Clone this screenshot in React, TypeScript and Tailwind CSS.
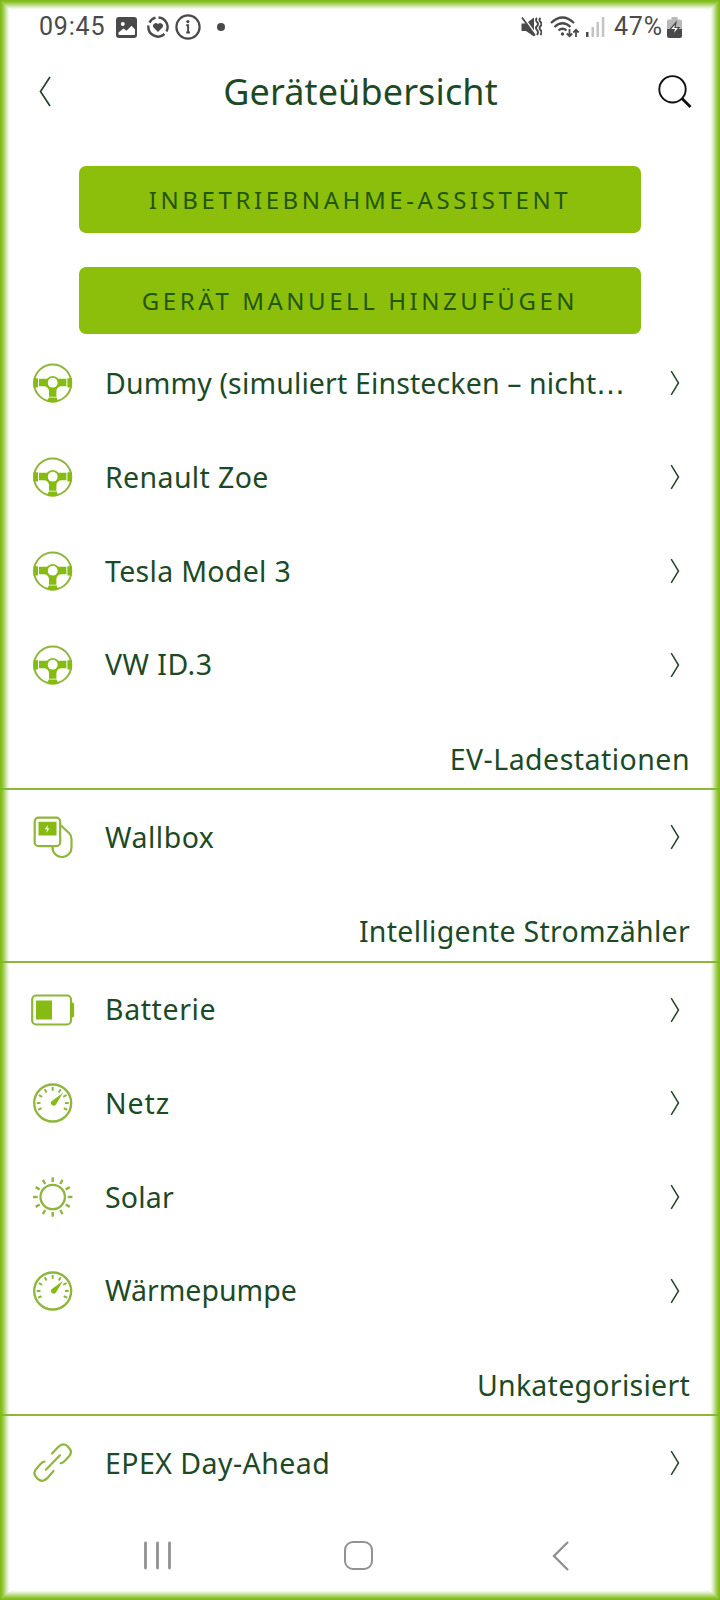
import type { ReactNode } from "react";

interface Device {
  name: string;
  icon: ReactNode;
  tracking: string;
  truncated?: boolean;
}

interface Section {
  title?: string;
  tracking?: string;
  devices: Device[];
}

function WheelIcon() {
  return (
    <svg width="40" height="40" viewBox="0 0 40 40" fill="none">
      <circle cx="19.700" cy="20" r="18.600" stroke="#8fb53c" strokeWidth="2" />
      <path
        d="M.4 15.200H5v9.400H.4zM34.400 15.200H39v9.400h-4.600zM15.700 34.600h8l1.500 4.200q-5.500 1.300-11 0z"
        fill="#86bc12"
      />
      <path
        d="M6 15.700h8a7.200 7.200 0 0 1 11.400 0h8v7.600h-5.200q-4.800.7-4.800 5.200v5.300H16v-5.300q0-4.500-4.800-5.200H6z"
        fill="#86bc12"
      />
      <circle cx="19.700" cy="19.700" r="4.900" fill="#fff" />
    </svg>
  );
}

function WallboxIcon() {
  return (
    <svg width="40" height="42" viewBox="0 0 40 42" fill="none" stroke="#8fb53c" strokeWidth="2.200">
      <rect x="1.700" y="1.700" width="25.500" height="28.500" rx="4" />
      <path d="M28 9.500l8 7.500q2.500 2.300 2.500 6v8.500a9.500 9.500 0 0 1-19 0v-1.500" />
      <rect x="5.500" y="5.800" width="18" height="13.700" fill="#86bc12" stroke="none" />
      <path d="M15 9l-3.200 4.300h2.200l-.7 3.500 3.200-4.300h-2.200z" fill="#fff" stroke="none" />
    </svg>
  );
}

function BatteryIcon() {
  return (
    <svg width="44" height="32" viewBox="0 0 44 32" fill="none">
      <rect x="1.200" y="1.500" width="38.800" height="29" rx="4" stroke="#8fb53c" strokeWidth="2.200" />
      <rect x="5" y="6.500" width="16" height="19" fill="#86bc12" />
      <path d="M39.500 8.500h2q1.600 0 1.600 2v11q0 2-1.600 2h-2z" fill="#86bc12" />
    </svg>
  );
}

const GAUGE_TICKS = [-115, -90, -60, -30, 0, 30, 60, 90, 115];

function GaugeIcon() {
  return (
    <svg width="40" height="40" viewBox="0 0 40 40" fill="none" stroke="#8fb53c">
      <circle cx="19.700" cy="20" r="18.500" strokeWidth="2.300" />
      {GAUGE_TICKS.map((angle) => (
        <path
          key={angle}
          d="M19.700 4v3.800"
          strokeWidth="2"
          transform={`rotate(${angle} 19.700 20)`}
        />
      ))}
      <path
        d="M30 9.700l-7.200 12a2.700 2.700 0 1 1-4.200-3.400z"
        fill="#86bc12"
        stroke="none"
      />
    </svg>
  );
}

const SUN_RAYS = [0, 30, 60, 90, 120, 150, 180, 210, 240, 270, 300, 330];

function SunIcon() {
  return (
    <svg width="40" height="40" viewBox="0 0 40 40" fill="none" stroke="#8fb53c">
      <circle cx="19.700" cy="20" r="12.200" strokeWidth="2.300" />
      {SUN_RAYS.map((angle) => (
        <path
          key={angle}
          d="M19.700 .3v4.700"
          strokeWidth="2.400"
          transform={`rotate(${angle} 19.700 20)`}
        />
      ))}
    </svg>
  );
}

function LinkIcon() {
  return (
    <svg
      width="40"
      height="40"
      viewBox="0 0 40 40"
      fill="none"
      stroke="#8fb53c"
      strokeWidth="2.200"
      strokeLinecap="round"
    >
      <path d="M19 10.500l6.500-6.700q4.500-4.600 8.800-.8l1.600 1.700q4 4.300 0 8.800l-4.500 4.700q-1.500 1.500-3.700 2" />
      <path d="M11.500 18.500q-2 .5-3.500 2l-4.200 4.700q-4.500 4.500-.8 8.800l2 2.200q4.500 3.700 9-.8l6.500-7.400" />
      <path d="M12.800 26.700L27 12.300" />
    </svg>
  );
}

function Chevron() {
  return (
    <svg width="10" height="26" viewBox="0 0 10 26" fill="none" stroke="#24452c" strokeWidth="1.500">
      <path d="M1.200 1.200L8.500 13 1.200 24.800" />
    </svg>
  );
}

const SECTIONS: Section[] = [
  {
    devices: [
      {
        name: "Dummy (simuliert Einstecken – nicht",
        icon: <WheelIcon />,
        tracking: "tracking-[0.130px]",
        truncated: true,
      },
      { name: "Renault Zoe", icon: <WheelIcon />, tracking: "tracking-[0.370px]" },
      { name: "Tesla Model 3", icon: <WheelIcon />, tracking: "tracking-[0.300px]" },
      { name: "VW ID.3", icon: <WheelIcon />, tracking: "tracking-[0.450px]" },
    ],
  },
  {
    title: "EV-Ladestationen",
    tracking: "tracking-[0.470px]",
    devices: [{ name: "Wallbox", icon: <WallboxIcon />, tracking: "tracking-[0.500px]" }],
  },
  {
    title: "Intelligente Stromzähler",
    tracking: "tracking-[0.300px]",
    devices: [
      { name: "Batterie", icon: <BatteryIcon />, tracking: "tracking-[0.600px]" },
      { name: "Netz", icon: <GaugeIcon />, tracking: "tracking-[0.900px]" },
      { name: "Solar", icon: <SunIcon />, tracking: "tracking-[0.200px]" },
      { name: "Wärmepumpe", icon: <GaugeIcon />, tracking: "tracking-normal" },
    ],
  },
  {
    title: "Unkategorisiert",
    tracking: "tracking-[0.270px]",
    devices: [{ name: "EPEX Day-Ahead", icon: <LinkIcon />, tracking: "tracking-[0.450px]" }],
  },
];

function StatusBar() {
  return (
    <header className="flex h-[54px] items-center justify-between pr-[38px] pl-[39px] font-[Roboto,sans-serif] text-[25px] text-[#4a4a4a]">
      <div className="flex items-center">
        <span className="w-[66px] whitespace-nowrap tracking-[0.800px]">09:45</span>
        <svg className="ml-[11px]" width="21" height="21" viewBox="0 0 21 21">
          <rect width="21" height="21" rx="3" fill="#4a4a4a" />
          <circle cx="6.800" cy="7" r="2" fill="#fff" />
          <path d="M2.500 15.500l5-4 3 2.300 5-5 3.500 3.700v4.500q0 1-1 1h-14.500q-1 0-1-1z" fill="#fff" />
        </svg>
        <svg className="ml-[10px]" width="22" height="22" viewBox="0 0 22 22" fill="none" stroke="#4a4a4a" strokeWidth="2.400">
          <path d="M8.500 1.600a9.600 9.600 0 0 0-6 5M1.500 9.500a9.600 9.600 0 0 0 16 8.500M19.500 15.500A9.600 9.600 0 0 0 11.500 1.500" />
          <path d="M11 16l-4.400-4.500a2.600 2.600 0 0 1 4.400-3.200 2.600 2.600 0 0 1 4.400 3.200z" fill="#4a4a4a" stroke="none" />
        </svg>
        <svg className="ml-[6px]" width="26" height="26" viewBox="0 0 26 26" fill="none" stroke="#4a4a4a">
          <circle cx="13" cy="13" r="11.600" strokeWidth="2.200" />
          <path d="M11.200 11.200h1.900v7.300M11.200 18.500h3.800" strokeWidth="1.900" />
          <circle cx="12.900" cy="7.600" r="1.600" fill="#4a4a4a" stroke="none" />
        </svg>
        <span className="ml-4 size-2 rounded-full bg-[#4a4a4a]" />
      </div>
      <div className="flex items-center">
        <svg width="21" height="20" viewBox="0 0 21 20" fill="none" stroke="#4a4a4a">
          <path d="M.5 6.500H5l8-6v19l-8-5.500H.5z" fill="#4a4a4a" stroke="none" />
          <path d="M2.500 0L16 19" stroke="#fff" strokeWidth="1.600" />
          <path d="M1 .5L14 18.500" strokeWidth="1.800" />
          <path d="M16 1q-2 2 0 4t0 4 0 4 0 5M19.500 1q-2 2 0 4t0 4 0 4 0 5" strokeWidth="1.900" />
        </svg>
        <svg className="ml-2" width="30" height="22" viewBox="0 0 30 22" fill="none" stroke="#4a4a4a" strokeWidth="2.200">
          <path d="M1 7q11.500-11 23 0M4.500 11q8-7.500 16 0M8.500 14.500q4-3.500 8 0" />
          <circle cx="12.500" cy="18" r="1.700" fill="#4a4a4a" stroke="none" />
          <path d="M19.500 13v7M16.800 17.500l2.700 2.700 2.700-2.700M26 21v-7M23.300 16.500l2.700-2.700 2.700 2.700" strokeWidth="1.800" />
        </svg>
        <svg className="ml-[6px]" width="19" height="20" viewBox="0 0 19 20">
          <rect x="0" y="15" width="2.500" height="5" fill="#4a4a4a" />
          <path d="M5.500 10H8v10H5.500zM10.500 5H13v15h-2.500zM15.800 0h2.500v20h-2.500z" fill="#c4c4c4" />
        </svg>
        <span className="ml-[9px] w-[53px] whitespace-nowrap tracking-[0.800px]">47%</span>
        <svg width="15" height="21" viewBox="0 0 15 21">
          <path d="M4.500 0h6v2.500H13q2 0 2 2V12H0V4.500q0-2 2-2h2.500z" fill="#b8b8b8" />
          <path d="M0 12h15v7q0 2-2 2H2q-2 0-2-2z" fill="#4a4a4a" />
          <path d="M9 5.500L3 12.500h4.200l-1.200 5.500 6-7.500H8z" fill="#fff" stroke="#4a4a4a" strokeWidth="1.200" />
        </svg>
      </div>
    </header>
  );
}

function TitleBar() {
  return (
    <div className="flex h-[76px] items-center justify-between pr-[28px] pb-[2px] pl-[39px]">
      <svg width="12" height="31" viewBox="0 0 12 31" fill="none" stroke="#24452c" strokeWidth="1.700">
        <path d="M11 1L1.500 15.500 11 30" />
      </svg>
      <h1 className="mt-0.5 ml-3 text-[36px] tracking-[0.120px]">Geräteübersicht</h1>
      <svg width="34" height="33" viewBox="0 0 34 33" fill="none" stroke="#111">
        <circle cx="14.500" cy="14.300" r="13.200" strokeWidth="1.900" />
        <path d="M24 23.500l8.500 8.500" strokeWidth="2.800" />
      </svg>
    </div>
  );
}

function DeviceRow({ name, icon, tracking, truncated }: Device) {
  return (
    <li className="flex h-[93.750px] items-center pr-[40px]">
      <span className="flex w-[105px] justify-center">{icon}</span>
      <span className={`flex-1 whitespace-nowrap ${tracking}`}>
        {name}
        {truncated && <span className="font-['DejaVu_Sans',sans-serif] leading-none">…</span>}
      </span>
      <Chevron />
    </li>
  );
}

function NavBar() {
  return (
    <nav className="flex h-[91px] items-center justify-between pr-[151px] pl-[144px] text-[#929292]">
      <svg width="27" height="29" viewBox="0 0 27 29" stroke="currentColor" strokeWidth="2.800" strokeLinecap="round">
        <path d="M1.500 2v25M13.500 2v25M25.500 2v25" />
      </svg>
      <span className="mr-[7px] h-[29px] w-[29px] rounded-[9px] border-[2.500px] border-current" />
      <svg width="17" height="30" viewBox="0 0 17 30" fill="none" stroke="currentColor" strokeWidth="2.400">
        <path d="M16 1L2 15l14 14" />
      </svg>
    </nav>
  );
}

export default function App() {
  return (
    <div className="relative h-[1600px] w-[720px] overflow-hidden bg-white font-['Noto_Sans',sans-serif] text-[28.500px] text-[#1d4a26]">
      <StatusBar />
      <TitleBar />
      <div className="flex flex-col gap-[34px] px-[79px] pt-9 text-[24px] text-[#23560f]">
        <button className="h-[67px] rounded-[7px] bg-[#8bbf0b] tracking-[3.600px]">INBETRIEBNAHME-ASSISTENT</button>
        <button className="h-[67px] rounded-[7px] bg-[#8bbf0b] tracking-[3.550px]">GERÄT MANUELL HINZUFÜGEN</button>
      </div>
      <main className="mt-[2.500px]">
        {SECTIONS.map(({ title, tracking, devices }) => (
          <section key={title ?? "vehicles"}>
            {title && (
              <h2 className="flex h-[78.700px] items-end justify-end border-b-2 border-[#8fb53c] pr-[30px] pb-[7.500px]">
                <span className={tracking}>{title}</span>
              </h2>
            )}
            <ul>
              {devices.map((device) => (
                <DeviceRow key={device.name} {...device} />
              ))}
            </ul>
          </section>
        ))}
      </main>
      <NavBar />
      {/* Green glow around the screen edge, one ring per pixel so the corners stay mitred */}
      <div className="pointer-events-none absolute inset-0 shadow-[inset_0_0_0_1px_rgb(128_188_24),inset_0_0_0_2px_rgb(128_188_24/0.67),inset_0_0_0_3px_rgb(128_188_24/0.44),inset_0_0_0_4px_rgb(128_188_24/0.32),inset_0_0_0_5px_rgb(128_188_24/0.24),inset_0_0_0_6px_rgb(128_188_24/0.2),inset_0_0_0_7px_rgb(128_188_24/0.15),inset_0_0_0_8px_rgb(128_188_24/0.13),inset_0_0_0_9px_rgb(128_188_24/0.07),inset_0_0_0_10px_rgb(128_188_24/0.03)]" />
    </div>
  );
}
